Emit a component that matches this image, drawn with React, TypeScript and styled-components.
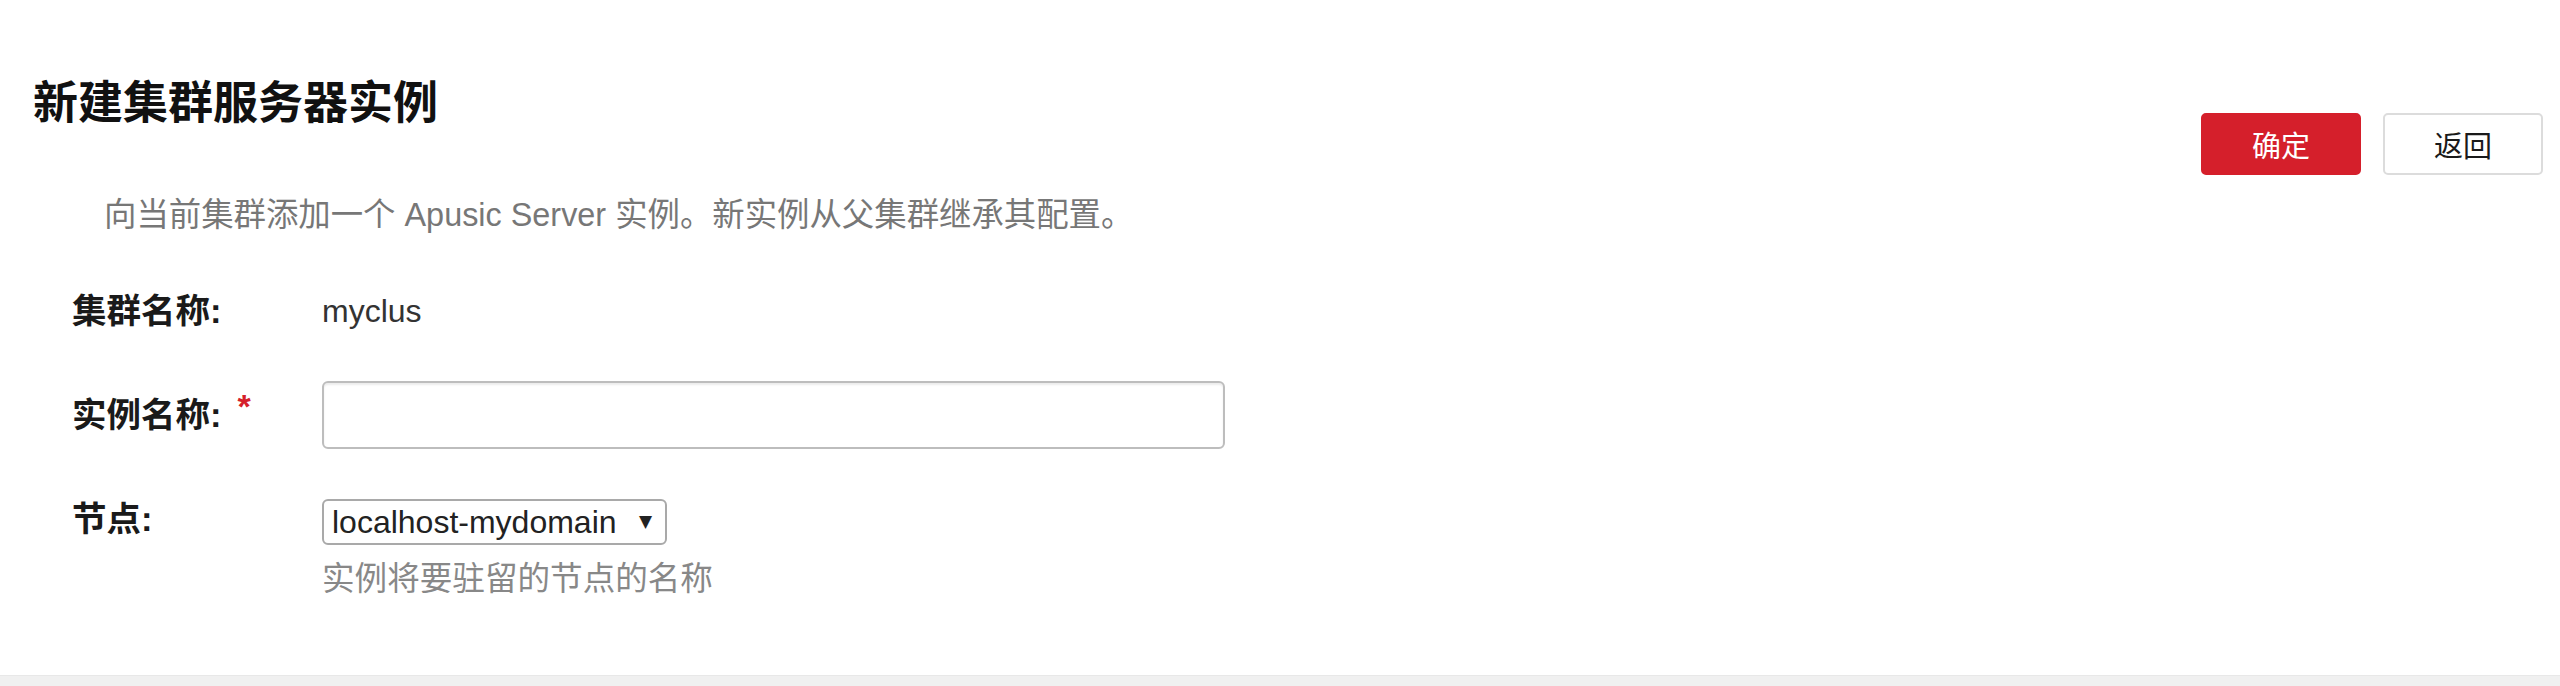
import React from "react";
import styled, { createGlobalStyle } from "styled-components";

const GlobalStyle = createGlobalStyle`
  html, body {
    margin: 0;
    padding: 0;
    background: #ffffff;
  }
  body {
    font-family: "Liberation Sans", "Noto Sans CJK SC", Arial, sans-serif;
    color: #222;
  }
  * { box-sizing: border-box; }
`;

const Page = styled.div`
  height: 686px;
  display: flex;
  flex-direction: column;
  background: #fff;
`;

const Header = styled.div`
  display: flex;
  justify-content: space-between;
  align-items: flex-start;
  padding: 0 17px 0 33px;
`;

const Title = styled.h1`
  margin: 77px 0 0;
  font-family: "Noto Sans CJK SC", sans-serif;
  font-size: 45px;
  line-height: 45px;
  font-weight: 700;
  color: #111;
`;

const Actions = styled.div`
  display: flex;
  gap: 22px;
  margin-top: 113px;
`;

const Button = styled.button<{ $primary?: boolean }>`
  width: 160px;
  height: 62px;
  border-radius: 5px;
  font-family: "Noto Sans CJK SC", sans-serif;
  font-size: 29px;
  line-height: 1;
  cursor: pointer;
  border: 2px solid ${(p) => (p.$primary ? "#d51f2b" : "#dcdcdc")};
  background: ${(p) => (p.$primary ? "#d51f2b" : "#ffffff")};
  color: ${(p) => (p.$primary ? "#ffffff" : "#1a1a1a")};
`;

const Description = styled.p`
  margin: 0;
  padding: 24px 0 0 104px;
  font-size: 32.4px;
  line-height: 32px;
  color: #777;
`;

const Form = styled.div`
  display: flex;
  flex-direction: column;
  padding-left: 72px;
`;

const Row = styled.div<{ $top: number; $align?: string }>`
  display: flex;
  align-items: ${(p) => p.$align || "flex-start"};
  margin-top: ${(p) => p.$top}px;
`;

const Label = styled.div<{ $offset?: number }>`
  width: 250px;
  flex: none;
  font-size: 34.5px;
  line-height: 32px;
  font-weight: 700;
  color: #1a1a1a;
  display: flex;
  align-items: flex-start;
  margin-top: ${(p) => p.$offset || 0}px;
`;

const Required = styled.span`
  color: #d51f2b;
  font-size: 34px;
  line-height: 30px;
  margin-left: 16px;
  margin-top: -8px;
`;

const Value = styled.div`
  font-size: 32px;
  line-height: 32px;
  color: #333;
`;

const TextInput = styled.input`
  width: 903px;
  height: 68px;
  border: 2px solid #bdbdbd;
  border-radius: 6px;
  box-shadow: inset 0 2px 2px rgba(0, 0, 0, 0.08);
  font-size: 30px;
  padding: 0 12px;
  outline: none;
`;

const FieldColumn = styled.div`
  display: flex;
  flex-direction: column;
  gap: 18px;
`;

const SelectWrap = styled.div`
  position: relative;
  width: 345px;
  height: 46px;
`;

const Select = styled.select`
  appearance: none;
  -webkit-appearance: none;
  width: 100%;
  height: 100%;
  border: 2px solid #a9a9a9;
  border-radius: 6px;
  background: #fff;
  font-family: "Liberation Sans", Arial, sans-serif;
  font-size: 32px;
  color: #222;
  padding: 0 0 0 8px;
  outline: none;
`;

const Arrow = styled.span`
  position: absolute;
  right: 15px;
  top: 50%;
  transform: translateY(-55%);
  font-family: "DejaVu Sans", sans-serif;
  font-size: 17px;
  line-height: 1;
  color: #222;
  pointer-events: none;
`;

const Help = styled.div`
  font-size: 32.6px;
  line-height: 32px;
  color: #888;
`;

const Footer = styled.div`
  margin-top: auto;
  height: 11px;
  background: #f0f0f0;
  border-top: 1px solid #e8e8e8;
`;

export default function App() {
  return (
    <>
      <GlobalStyle />
      <Page>
        <Header>
          <Title>新建集群服务器实例</Title>
          <Actions>
            <Button $primary>确定</Button>
            <Button>返回</Button>
          </Actions>
        </Header>
        <Description>
          向当前集群添加一个 Apusic Server 实例。新实例从父集群继承其配置。
        </Description>
        <Form>
          <Row $top={64}>
            <Label>集群名称:</Label>
            <Value>myclus</Value>
          </Row>
          <Row $top={54} $align="center">
            <Label>
              实例名称:<Required>*</Required>
            </Label>
            <TextInput type="text" />
          </Row>
          <Row $top={50}>
            <Label $offset={4}>节点:</Label>
            <FieldColumn>
              <SelectWrap>
                <Select defaultValue="localhost-mydomain">
                  <option value="localhost-mydomain">localhost-mydomain</option>
                </Select>
                <Arrow>▼</Arrow>
              </SelectWrap>
              <Help>实例将要驻留的节点的名称</Help>
            </FieldColumn>
          </Row>
        </Form>
        <Footer />
      </Page>
    </>
  );
}
